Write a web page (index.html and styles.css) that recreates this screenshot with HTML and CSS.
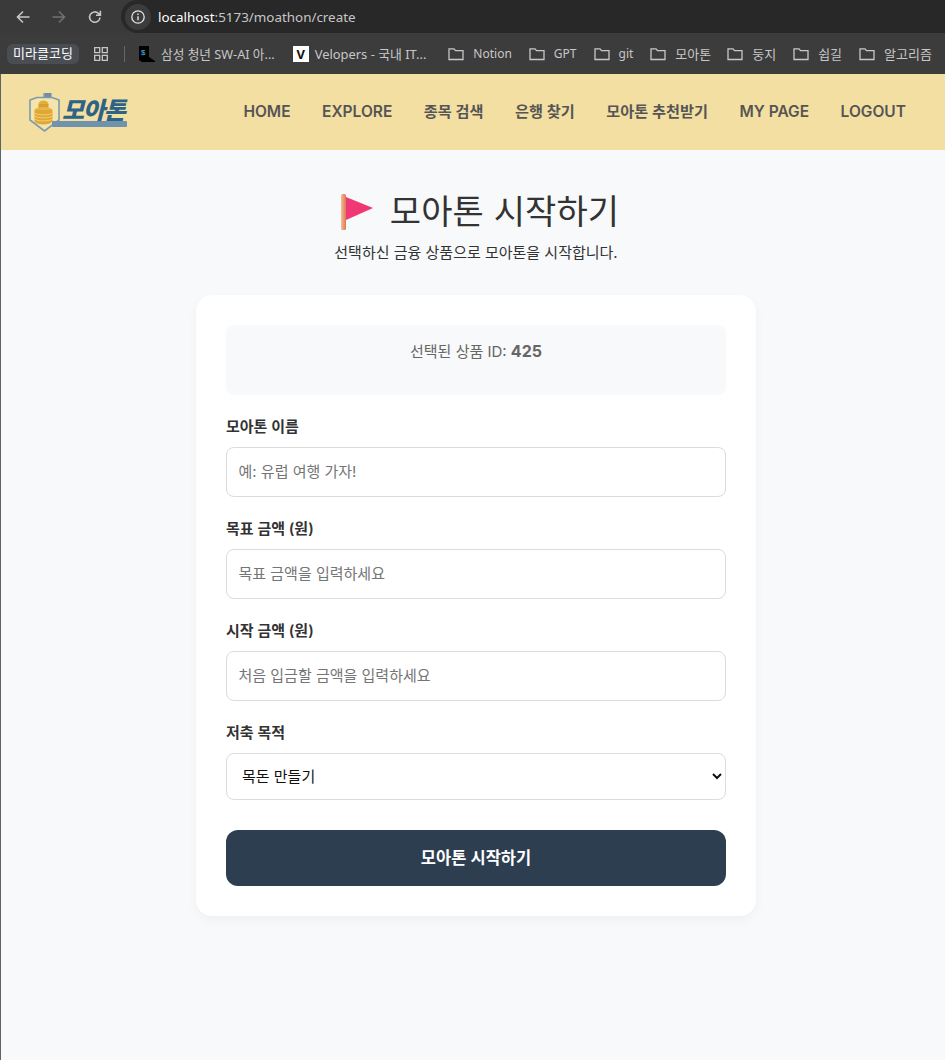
FILE: index.html
```html
<!DOCTYPE html>
<html lang="ko">
<head>
    <meta charset="UTF-8">
    <meta name="viewport" content="width=device-width, initial-scale=1.0">
    <title>모아톤 시작하기</title>
    <link rel="stylesheet" href="styles.css">
</head>
<body>

    <!-- 브라우저 상단 -->
    <div class="browser-top">
        <div class="address-row">
            <svg class="nav-icon" width="16" height="16" viewBox="0 0 16 16"><path d="M14.500 8H3M8 2.500 2.500 8 8 13.500" fill="none" stroke="#c7c7c7" stroke-width="1.600"/></svg>
            <svg class="nav-icon" width="16" height="16" viewBox="0 0 16 16"><path d="M1.500 8H13M8 2.500 13.500 8 8 13.500" fill="none" stroke="#717171" stroke-width="1.600"/></svg>
            <svg class="nav-icon" width="16" height="16" viewBox="0 0 16 16"><path d="M13 8.500a5.200 5.200 0 1 1-1.600-4.200L13.200 6M13.400 1.800v4.400H9" fill="none" stroke="#c7c7c7" stroke-width="1.600"/></svg>
            <div class="address-box">
                <span class="site-info">
                    <svg width="16" height="16" viewBox="0 0 16 16"><circle cx="8" cy="8" r="6.200" fill="none" stroke="#e3e3e3" stroke-width="1.300"/><path d="M8 7.200v4M8 4.600v1.500" stroke="#e3e3e3" stroke-width="1.400"/></svg>
                </span>
                <span class="url"><span class="url-host">localhost</span>:5173/moathon/create</span>
            </div>
        </div>
        <div class="bookmark-row">
            <span class="profile-chip">미라클코딩</span>
            <svg class="apps-icon" width="14" height="14" viewBox="0 0 14 14"><path d="M.7.7h5v5h-5zM8.300.7h5v5h-5zM.7 8.300h5v5h-5zM8.300 8.300h5v5h-5z" fill="none" stroke="#c7c7c7" stroke-width="1.300"/></svg>
            <span class="bookmark-divider"></span>
            <span class="bookmark site-ssafy">
                <svg width="16" height="16" viewBox="0 0 16 16"><path d="M0 0h10v11l6 4v1H3l-3-2z" fill="#000"/><text x="1.800" y="9" class="ssafy-mark">$</text></svg>
                삼성 청년 SW-AI 아...
            </span>
            <span class="bookmark site-velopers">
                <span class="velopers-mark">V</span>
                Velopers - 국내 IT...
            </span>
            <span class="bookmark folder first-folder"><svg class="folder-icon" width="16" height="14" viewBox="0 0 16 14"><path d="M1 12.500V1.800h5l1.500 1.800h7.500v8.900z" fill="none" stroke="#c7c7c7" stroke-width="1.300"/></svg>Notion</span>
            <span class="bookmark folder"><svg class="folder-icon" width="16" height="14" viewBox="0 0 16 14"><path d="M1 12.500V1.800h5l1.500 1.800h7.500v8.900z" fill="none" stroke="#c7c7c7" stroke-width="1.300"/></svg>GPT</span>
            <span class="bookmark folder"><svg class="folder-icon" width="16" height="14" viewBox="0 0 16 14"><path d="M1 12.500V1.800h5l1.500 1.800h7.500v8.900z" fill="none" stroke="#c7c7c7" stroke-width="1.300"/></svg>git</span>
            <span class="bookmark folder ko-full"><svg class="folder-icon" width="16" height="14" viewBox="0 0 16 14"><path d="M1 12.500V1.800h5l1.500 1.800h7.500v8.900z" fill="none" stroke="#c7c7c7" stroke-width="1.300"/></svg>모아톤</span>
            <span class="bookmark folder ko-full"><svg class="folder-icon" width="16" height="14" viewBox="0 0 16 14"><path d="M1 12.500V1.800h5l1.500 1.800h7.500v8.900z" fill="none" stroke="#c7c7c7" stroke-width="1.300"/></svg>둥지</span>
            <span class="bookmark folder ko-full"><svg class="folder-icon" width="16" height="14" viewBox="0 0 16 14"><path d="M1 12.500V1.800h5l1.500 1.800h7.500v8.900z" fill="none" stroke="#c7c7c7" stroke-width="1.300"/></svg>쉽길</span>
            <span class="bookmark folder ko-full"><svg class="folder-icon" width="16" height="14" viewBox="0 0 16 14"><path d="M1 12.500V1.800h5l1.500 1.800h7.500v8.900z" fill="none" stroke="#c7c7c7" stroke-width="1.300"/></svg>알고리즘</span>
        </div>
    </div>

    <div class="page">
        <header class="site-header">
            <a href="#" class="logo">
                <svg class="logo-badge" width="31" height="40" viewBox="0 0 31 40">
                    <path d="M15 1v7" stroke="#5b7f96" stroke-width="1"/>
                    <path d="M15.500 1h7v5h-7z" fill="#6d8ea3"/>
                    <path d="M1 8 8 5.500h15L30 8v20L15.500 39 1 28z" fill="#f6e4ae" stroke="#7d9aab" stroke-width="1.600"/>
                    <ellipse cx="14.500" cy="12" rx="5" ry="3.500" fill="#e4ae3c"/>
                    <rect x="9.500" y="12" width="10" height="5" fill="#d99f2e"/>
                    <ellipse cx="14.500" cy="18" rx="9" ry="3" fill="#e8b644"/>
                    <rect x="5.500" y="18" width="18" height="11" fill="#dfa735"/>
                    <ellipse cx="14.500" cy="29" rx="9" ry="3.500" fill="#dfa735"/>
                    <path d="M5.500 21c3 2.500 15 2.500 18 0M5.500 24c3 2.500 15 2.500 18 0M5.500 27c3 2.500 15 2.500 18 0" fill="none" stroke="#f3cf74" stroke-width="1"/>
                </svg>
                <span class="logo-text">모아톤</span>
                <span class="logo-band"></span>
            </a>
            <nav class="main-nav">
                <a href="#">HOME</a>
                <a href="#">EXPLORE</a>
                <a href="#" class="nav-ko">종목 검색</a>
                <a href="#" class="nav-ko">은행 찾기</a>
                <a href="#" class="nav-ko">모아톤 추천받기</a>
                <a href="#">MY PAGE</a>
                <a href="#">LOGOUT</a>
            </nav>
        </header>

        <main class="create-page">
            <h1 class="page-title">
                <svg class="flag-icon" width="33" height="38" viewBox="0 0 33 38">
                    <defs>
                        <linearGradient id="pole" x1="0" x2="1" y1="0" y2="0"><stop offset="0" stop-color="#f6bd9a"/><stop offset="1" stop-color="#d9794f"/></linearGradient>
                        <linearGradient id="pennant" x1="0" x2="1" y1="0" y2="0"><stop offset="0" stop-color="#ef3a78"/><stop offset="1" stop-color="#f2356a"/></linearGradient>
                    </defs>
                    <rect x="1" y="1" width="5" height="36" rx="1.500" fill="url(#pole)"/>
                    <path d="M6 4 33 15 6 27z" fill="url(#pennant)"/>
                </svg>
                모아톤 시작하기
            </h1>
            <p class="page-desc">선택하신 금융 상품으로 모아톤을 시작합니다.</p>

            <form class="create-card">
                <div class="selected-product">선택된 상품 ID: <strong>425</strong></div>

                <div class="form-group">
                    <label for="name">모아톤 이름</label>
                    <input id="name" type="text" placeholder="예: 유럽 여행 가자!">
                </div>
                <div class="form-group">
                    <label for="goal">목표 금액 (원)</label>
                    <input id="goal" type="text" placeholder="목표 금액을 입력하세요">
                </div>
                <div class="form-group">
                    <label for="start">시작 금액 (원)</label>
                    <input id="start" type="text" placeholder="처음 입금할 금액을 입력하세요">
                </div>
                <div class="form-group">
                    <label for="purpose">저축 목적</label>
                    <select id="purpose">
                        <option>목돈 만들기</option>
                    </select>
                </div>

                <button type="button" class="submit-btn">모아톤 시작하기</button>
            </form>
        </main>
    </div>

</body>
</html>
```

FILE: styles.css
```css
/* --- 기본 --- */
:root {
    --header-color: #f3dfa2;
    --page-bg: #f8f9fa;
    --navy: #2c3e50;
    --text-color: #333;
    --border-color: #dcdcdc;
}

* {
    box-sizing: border-box;
}

html, body {
    height: 100%;
}

body {
    margin: 0;
    display: flex;
    flex-direction: column;
    font-family: Inter, "Noto Sans CJK KR", sans-serif;
    background-color: var(--page-bg);
    color: var(--text-color);
}

/* --- 브라우저 상단 --- */
.browser-top {
    flex-shrink: 0;
    font-family: "Noto Sans", "Noto Sans CJK KR", sans-serif;
}

.address-row {
    display: flex;
    align-items: center;
    height: 33px;
    background-color: #3a3a3a;
    padding-left: 15px;
}

.nav-icon {
    margin-right: 20px;
}

.nav-icon:nth-child(3) {
    margin-right: 18px;
}

.address-box {
    display: flex;
    align-items: center;
    flex: 1;
    height: 33px;
    padding-left: 4px;
    border-radius: 17px 0 0 17px;
    background-color: #282828;
    color: #c7c7c7;
    font-size: 13.400px;
}

.site-info {
    display: flex;
    align-items: center;
    justify-content: center;
    width: 26px;
    height: 26px;
    border-radius: 50%;
    background-color: #3c3c3c;
    margin-right: 7px;
}

.url-host {
    color: #fff;
}

.bookmark-row {
    display: flex;
    align-items: center;
    height: 41px;
    background-color: #3c3c3c;
    padding-left: 7px;
    color: #c7c7c7;
    font-size: 12px;
    white-space: nowrap;
    overflow: hidden;
}

.profile-chip {
    width: 72px;
    height: 20px;
    background-color: #4a4d52;
    color: #fff;
    border-radius: 6px;
    font-size: 13px;
    line-height: 19px;
    text-align: center;
}

.apps-icon {
    flex-shrink: 0;
    margin-left: 15px;
}

.bookmark-divider {
    width: 1px;
    height: 16px;
    background-color: #666;
    margin: 0 14px 0 16px;
}

.bookmark {
    display: inline-flex;
    align-items: center;
    gap: 6px;
}

.site-ssafy {
    font-size: 12.700px;
}

.ko-full {
    font-size: 13px;
}

.site-velopers {
    margin-left: 18px;
    font-size: 12.900px;
}

.velopers-mark {
    display: inline-block;
    width: 16px;
    height: 16px;
    background-color: #fff;
    color: #111;
    font-size: 13px;
    font-weight: 700;
    line-height: 16px;
    text-align: center;
}

.ssafy-mark {
    fill: #4fb8e8;
    font-size: 8px;
    font-family: "Liberation Mono", monospace;
}

.folder {
    margin-left: 17px;
    gap: 9px;
}

.first-folder {
    margin-left: 22px;
}

.ko-full:nth-child(10) {
    margin-left: 16px;
}

/* --- 페이지 --- */
.page {
    flex: 1;
    border-left: 1px solid #5f6368;
    min-height: 0;
}

.site-header {
    display: flex;
    align-items: center;
    justify-content: space-between;
    height: 76px;
    background-color: var(--header-color);
    padding: 0 39px 0 28px;
}

.logo {
    position: relative;
    display: flex;
    align-items: center;
    width: 99px;
    height: 40px;
    text-decoration: none;
}

.logo-badge {
    flex-shrink: 0;
}

.logo-text {
    position: relative;
    z-index: 1;
    color: #2f6287;
    font-size: 24px;
    font-weight: 900;
    font-style: italic;
    letter-spacing: -1.200px;
    margin: 0 0 2px 2px;
    line-height: 1;
}

.logo-band {
    position: absolute;
    left: 23px;
    top: 29px;
    width: 75px;
    height: 6px;
    background-color: #6f93ad;
    border-radius: 1px;
}

.main-nav {
    display: flex;
    align-items: baseline;
    gap: 31.500px;
}

.main-nav a {
    color: #555;
    font-size: 15.500px;
    font-weight: 600;
    line-height: 20px;
    text-decoration: none;
}

.main-nav .nav-ko {
    font-size: 15.200px;
}

/* --- 모아톤 생성 --- */
.create-page {
    display: flex;
    flex-direction: column;
    align-items: center;
    padding: 38px 0 0 6px;
}

.page-title {
    display: flex;
    align-items: center;
    margin: 0;
    padding-left: 7px;
    font-size: 34px;
    font-weight: 400;
    letter-spacing: 0.100px;
    line-height: 48px;
    color: #333;
}

.flag-icon {
    margin-right: 17px;
}

.page-desc {
    margin: 6px 0 0;
    font-size: 15px;
    line-height: 22px;
    color: #333;
}

.create-card {
    width: 560px;
    margin-top: 31px;
    padding: 30px;
    background-color: #fff;
    border-radius: 16px;
    box-shadow: 0 4px 12px rgba(0, 0, 0, 0.04);
}

.selected-product {
    height: 70px;
    padding-top: 16px;
    border-radius: 8px;
    background-color: var(--page-bg);
    color: #666;
    font-size: 15px;
    line-height: 21px;
    text-align: center;
}

.selected-product strong {
    font-size: 16px;
}

.form-group {
    margin-top: 21px;
}

.form-group label {
    display: block;
    margin-bottom: 9px;
    font-size: 15px;
    font-weight: 600;
    line-height: 22px;
    color: #333;
}

.form-group input,
.form-group select {
    display: block;
    width: 100%;
    height: 50px;
    padding: 0 11.500px 2px;
    border: 1px solid var(--border-color);
    border-radius: 8px;
    background-color: #fff;
    font-family: inherit;
    font-size: 15px;
    color: #222;
}

.form-group select {
    height: 47px;
    padding: 0 11px;
    color: #111;
}

.form-group input::placeholder {
    color: #757575;
}

.submit-btn {
    display: block;
    width: 100%;
    height: 56px;
    margin-top: 30px;
    padding: 0 0 2px;
    border: none;
    border-radius: 12px;
    background-color: var(--navy);
    color: #fff;
    font-family: inherit;
    font-size: 16.500px;
    font-weight: 600;
}
```
